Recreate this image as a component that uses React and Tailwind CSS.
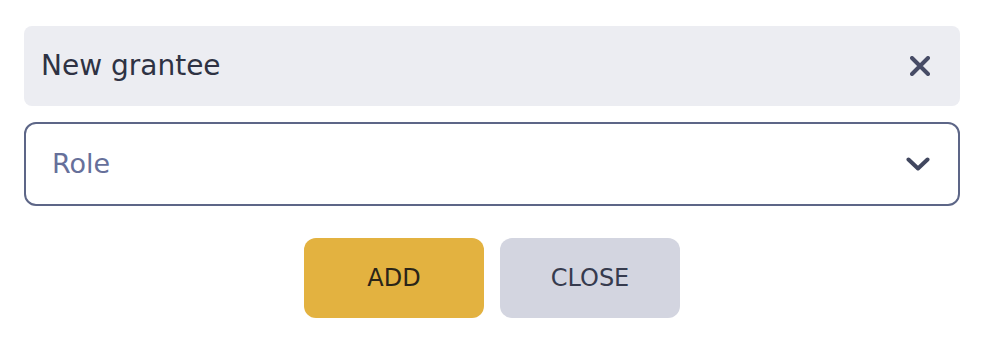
import React from "react";

export default function App() {
  return (
    <div
      className="bg-white w-[986px] h-[360px] pt-[26px] pl-6 pr-[26px]"
      style={{ fontFamily: "'DejaVu Sans', sans-serif" }}
    >
      <div className="h-20 rounded-lg bg-[#ECEDF2] flex items-center justify-between pl-[17px] pr-[30px]">
        <span className="text-[28px] text-[#2E3243]">New grantee</span>
        <svg width="20" height="20" viewBox="0 0 20 20" className="text-[#474C66]">
          <path d="M2 2 L18 18 M18 2 L2 18" stroke="currentColor" strokeWidth="4" strokeLinecap="round" />
        </svg>
      </div>

      <div className="mt-4 h-[84px] rounded-xl border-2 border-[#5D6687] flex items-center justify-between pl-[26px] pr-[28px]">
        <span className="text-[27px] text-[#66709A]">Role</span>
        <svg width="24" height="14" viewBox="0 0 24 14" className="text-[#41475F]">
          <path d="M2.5 2.5 L12 11.5 L21.5 2.5" stroke="currentColor" strokeWidth="4" fill="none" strokeLinecap="round" strokeLinejoin="round" />
        </svg>
      </div>

      <div className="mt-8 flex justify-center gap-4">
        <button className="w-[180px] h-20 rounded-xl bg-[#E3B240] text-[#2A2418] text-[24px] uppercase">
          Add
        </button>
        <button className="w-[180px] h-20 rounded-xl bg-[#D3D5E0] text-[#363B4E] text-[24px] uppercase">
          Close
        </button>
      </div>
    </div>
  );
}
